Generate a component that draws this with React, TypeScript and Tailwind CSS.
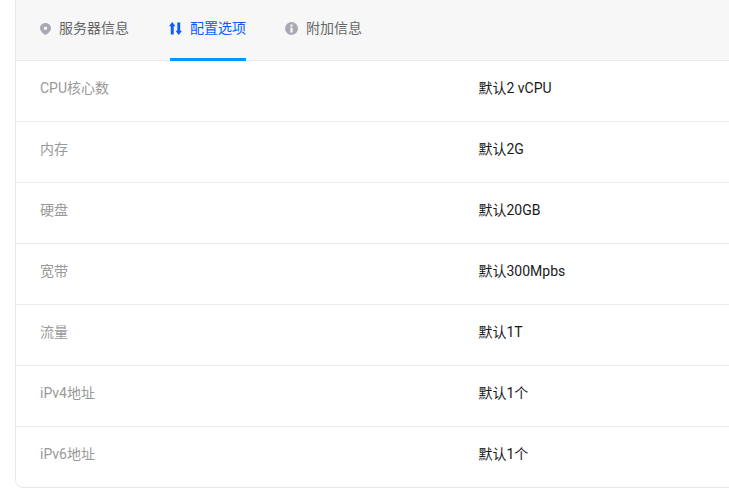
import React from 'react';

const rows = [
  { label: 'CPU核心数', value: '默认2 vCPU' },
  { label: '内存', value: '默认2G' },
  { label: '硬盘', value: '默认20GB' },
  { label: '宽带', value: '默认300Mpbs' },
  { label: '流量', value: '默认1T' },
  { label: 'iPv4地址', value: '默认1个' },
  { label: 'iPv6地址', value: '默认1个' },
];

const MarkerIcon = () => (
  <svg className="shrink-0 mt-[1px] text-[#a9a9b5]" width="11" height="12" viewBox="0 0 11 12" fill="currentColor">
    <path fillRule="evenodd" d="M5.500 0C8.600 0 11 2.300 11 5.200c0 2.600-3 5.400-5.500 6.800C3 10.600 0 7.800 0 5.200 0 2.300 2.400 0 5.500 0zM5.500 3.500a1.700 1.700 0 1 0 0 3.400 1.700 1.700 0 0 0 0-3.400z" />
  </svg>
);

const ArrowsIcon = () => (
  <svg className="shrink-0 mt-[1px]" width="13" height="13" viewBox="0 0 13 13" fill="currentColor">
    <path d="M3.250 0L6.500 4.200H4.700V12.500H1.800V4.200H0z" />
    <path d="M8.300 0.500H11.200V8.800H13L9.750 13L6.500 8.800H8.300z" />
  </svg>
);

const InfoIcon = () => (
  <svg className="shrink-0 mt-[1px] text-[#a9a9b5]" width="13" height="13" viewBox="0 0 13 13" fill="currentColor">
    <path fillRule="evenodd" d="M6.500 0a6.500 6.500 0 1 1 0 13 6.500 6.500 0 0 1 0-13zM5.400 2.600v2h2.200v-2zM5.400 5.600v4.800h2.200V5.600z" />
  </svg>
);

const App: React.FC = () => {
  return (
    <div className="w-[729px] h-[489px] overflow-hidden bg-white font-['Roboto','Noto_Sans_CJK_SC',sans-serif] text-[14px]">
      <div className="ml-[15px] w-[760px] h-[488px] border-l border-b border-[#e8e8e8] rounded-bl-[8px] overflow-hidden">
        {/* Tabs */}
        <div className="h-[61px] bg-[#f7f7f7] border-b border-[#ebebeb] pl-6 flex gap-10">
          <div className="h-[61px] flex items-center gap-2 text-[#666666] pb-[5px]">
            <MarkerIcon />
            <span>服务器信息</span>
          </div>
          <div className="relative h-[61px] flex items-center gap-2 text-[#0a5cff] pb-[5px]">
            <ArrowsIcon />
            <span>配置选项</span>
            <div className="absolute left-[1px] right-0 bottom-0 h-[3px] bg-[#0099ff]" />
          </div>
          <div className="h-[61px] flex items-center gap-2 text-[#666666] pb-[5px] -ml-[1px]">
            <InfoIcon />
            <span>附加信息</span>
          </div>
        </div>
        {/* Rows */}
        {rows.map((row, i) => (
          <div key={row.label} className={`h-[61px] flex items-center pl-6 pb-[6px] ${i < rows.length - 1 ? 'border-b border-[#ebebeb]' : ''}`}>
            <div className="w-[438.5px] text-[#999999]">{row.label}</div>
            <div className="text-[#1a1a1a]">{row.value}</div>
          </div>
        ))}
      </div>
    </div>
  );
};

export default App;
